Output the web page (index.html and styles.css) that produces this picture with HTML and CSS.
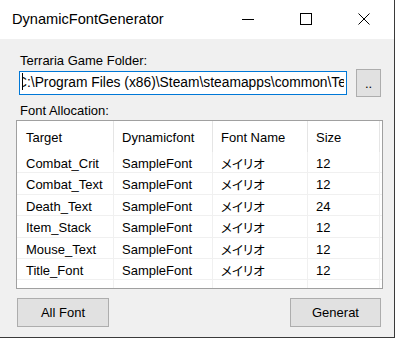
FILE: index.html
```html
<!DOCTYPE html>
<html>
<head>
<meta charset="utf-8">
<link rel="stylesheet" href="styles.css">
</head>
<body>
<div class="window">
  <div class="titlebar">
    <div class="title">DynamicFontGenerator</div>
    <div class="caption">
      <div class="cbtn"><svg width="12" height="12" viewBox="0 0 12 12"><line x1="0" y1="6.5" x2="12" y2="6.5" stroke="#000" stroke-width="1"/></svg></div>
      <div class="cbtn"><svg width="12" height="12" viewBox="0 0 12 12"><rect x="0.5" y="0.5" width="11" height="11" fill="none" stroke="#000" stroke-width="1"/></svg></div>
      <div class="cbtn"><svg width="12" height="12" viewBox="0 0 12 12"><path d="M0.5 0.5 L11.5 11.5 M11.5 0.5 L0.5 11.5" stroke="#000" stroke-width="1" fill="none"/></svg></div>
    </div>
  </div>
  <div class="client">
    <div class="label l1">Terraria Game Folder:</div>
    <div class="path-row">
      <div class="textbox"><div class="clip"><span class="path">C:\Program Files (x86)\Steam\steamapps\common\Terraria</span></div></div>
      <div class="btn browse">..</div>
    </div>
    <div class="label l2">Font Allocation:</div>
    <div class="listview">
      <div class="row header">
        <div class="cell first">Target</div><div class="cell">Dynamicfont</div><div class="cell">Font Name</div><div class="cell">Size</div><div class="cell end"></div>
      </div>
      <div class="row item">
        <div class="cell first">Combat_Crit</div><div class="cell">SampleFont</div><div class="cell jp">メイリオ</div><div class="cell">12</div><div class="cell end"></div>
      </div>
      <div class="row item">
        <div class="cell first">Combat_Text</div><div class="cell">SampleFont</div><div class="cell jp">メイリオ</div><div class="cell">12</div><div class="cell end"></div>
      </div>
      <div class="row item">
        <div class="cell first">Death_Text</div><div class="cell">SampleFont</div><div class="cell jp">メイリオ</div><div class="cell">24</div><div class="cell end"></div>
      </div>
      <div class="row item">
        <div class="cell first">Item_Stack</div><div class="cell">SampleFont</div><div class="cell jp">メイリオ</div><div class="cell">12</div><div class="cell end"></div>
      </div>
      <div class="row item">
        <div class="cell first">Mouse_Text</div><div class="cell">SampleFont</div><div class="cell jp">メイリオ</div><div class="cell">12</div><div class="cell end"></div>
      </div>
      <div class="row item">
        <div class="cell first">Title_Font</div><div class="cell">SampleFont</div><div class="cell jp">メイリオ</div><div class="cell">12</div><div class="cell end"></div>
      </div>
      <div class="row item">
        <div class="cell first"></div><div class="cell"></div><div class="cell"></div><div class="cell"></div><div class="cell end"></div>
      </div>
    </div>
    <div class="actions">
      <div class="btn action">All Font</div>
      <div class="btn action gen">Generat</div>
    </div>
  </div>
</div>
</body>
</html>
```

FILE: styles.css
```css
html, body {
  margin: 0;
  padding: 0;
  background: #f0f0f0;
}
body {
  font-family: "Liberation Sans", Arial, sans-serif;
  font-size: 13px;
  color: #000;
}
.window {
  width: 395px;
  height: 338px;
  box-sizing: border-box;
  border-right: 1px solid #3a3a3a;
  border-bottom: 1px solid #3a3a3a;
  background: #f0f0f0;
  display: flex;
  flex-direction: column;
  overflow: hidden;
}
.titlebar {
  height: 39px;
  background: #fff;
  display: flex;
}
.title {
  flex: 1;
  padding-left: 12px;
  font-size: 14.6px;
  line-height: 39px;
}
.caption {
  display: flex;
  margin-right: 1px;
}
.cbtn {
  width: 58px;
  display: flex;
  align-items: center;
  justify-content: center;
}
.cbtn svg {
  display: block;
  margin-top: -2px;
}
.client {
  flex: 1;
  display: flex;
  flex-direction: column;
}
.label {
  padding-left: 20px;
  line-height: 15px;
  height: 15px;
}
.l1 {
  margin-top: 14px;
}
.path-row {
  margin-top: 1px;
  height: 28px;
  display: flex;
  align-items: center;
  padding-left: 19px;
  gap: 9px;
}
.textbox {
  position: relative;
  width: 328px;
  height: 24px;
  box-sizing: border-box;
  border: 1px solid #0078d7;
  background: #fff;
  padding: 0 2px;
  overflow: hidden;
}
.textbox::before {
  content: "";
  position: absolute;
  left: 2px;
  top: 1px;
  width: 1px;
  height: 17px;
  background: #000;
}
.clip {
  overflow: hidden;
  white-space: nowrap;
  height: 22px;
  line-height: 21px;
  font-size: 13.8px;
}
.path {
  display: inline-block;
  margin-left: -5px;
}
.btn {
  box-sizing: border-box;
  background: #e1e1e1;
  border: 1px solid #adadad;
  display: flex;
  align-items: center;
  justify-content: center;
}
.browse {
  width: 25px;
  height: 28px;
}
.l2 {
  margin-top: 6px;
}
.listview {
  margin: 2px 0 0 16px;
  width: 367px;
  height: 169px;
  box-sizing: border-box;
  border: 1px solid #a0a0a0;
  background: #fff;
  overflow: hidden;
  flex: none;
}
.row {
  display: grid;
  grid-template-columns: 97px 99px 95px 72px 1fr;
}
.cell {
  box-sizing: border-box;
  padding-left: 8px;
  white-space: nowrap;
  overflow: hidden;
  border-right: 1px solid #f0f0f0;
}
.cell.first {
  padding-left: 9px;
}
.cell.end {
  border-right: none;
}
.header .cell {
  height: 31px;
  padding-top: 3px;
  line-height: 28px;
  border-right-color: #e5e5e5;
}
.header .cell.end {
  border-right: none;
}
.item {
  height: 21.4px;
  box-sizing: border-box;
  border-bottom: 1px solid #f0f0f0;
}
.item .cell {
  padding-top: 4px;
  line-height: 16.4px;
}
.jp {
  font-family: "Noto Sans CJK JP", "Liberation Sans", sans-serif;
  font-feature-settings: "palt";
  font-size: 12.5px;
}
.actions {
  margin-top: 9px;
  display: flex;
  justify-content: space-between;
  padding: 0 13px 0 17px;
}
.action {
  width: 92px;
  height: 29px;
}
.action.gen {
  width: 91px;
}
```
